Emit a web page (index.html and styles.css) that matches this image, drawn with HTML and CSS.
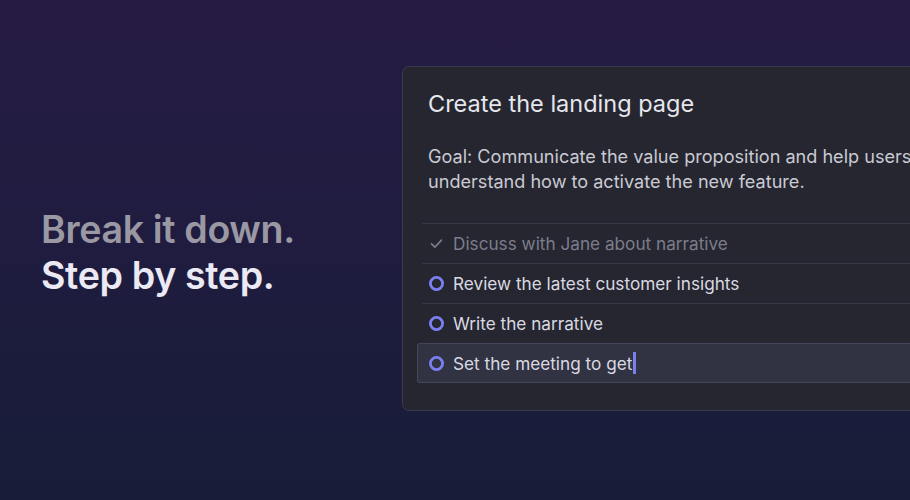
FILE: index.html
```html
<!DOCTYPE html>
<html>
<head>
<meta charset="utf-8">
<link rel="stylesheet" href="styles.css">
</head>
<body>
<div class="page">
  <div class="intro">
    <h1 class="headline"><span class="muted">Break it down.</span><span class="bright">Step by step.</span></h1>
  </div>
  <div class="card">
    <h2 class="title">Create the landing page</h2>
    <p class="goal">Goal: Communicate the value proposition and help users understand how to activate the new feature.</p>
    <ul class="list">
      <li class="row done">
        <svg class="icon" width="15" height="15" viewBox="0 0 15 15"><path d="M2.5 7.9 L5.9 11.1 L12.5 4.1" fill="none" stroke="#7c7d8a" stroke-width="1.6" stroke-linecap="round" stroke-linejoin="round"/></svg>
        <span>Discuss with Jane about narrative</span>
      </li>
      <li class="row">
        <svg class="icon" width="15" height="15" viewBox="0 0 15 15"><circle cx="7.5" cy="7.5" r="6.1" fill="none" stroke="#7b80f0" stroke-width="2.8"/></svg>
        <span>Review the latest customer insights</span>
      </li>
      <li class="row">
        <svg class="icon" width="15" height="15" viewBox="0 0 15 15"><circle cx="7.5" cy="7.5" r="6.1" fill="none" stroke="#7b80f0" stroke-width="2.8"/></svg>
        <span>Write the narrative</span>
      </li>
      <li class="row active">
        <svg class="icon" width="15" height="15" viewBox="0 0 15 15"><circle cx="7.5" cy="7.5" r="6.1" fill="none" stroke="#7b80f0" stroke-width="2.8"/></svg>
        <span>Set the meeting to get</span><span class="caret"></span>
      </li>
    </ul>
  </div>
</div>
</body>
</html>
```

FILE: styles.css
```css
* { box-sizing: border-box; }
html, body { margin: 0; padding: 0; }
body {
  width: 910px;
  height: 500px;
  overflow: hidden;
  font-family: Inter, "Noto Sans", sans-serif;
  background: linear-gradient(180deg, #261b43 0%, #201c40 45%, #171d38 100%);
}
.page {
  display: flex;
  height: 500px;
  padding-top: 66px;
}
.intro {
  width: 402px;
  flex: none;
  padding-left: 41px;
  padding-top: 141px;
}
.headline {
  margin: 0;
  font-size: 37.6px;
  font-weight: 600;
  line-height: 46px;
  letter-spacing: -0.35px;
  display: flex;
  flex-direction: column;
}
.muted { color: #9a98a3; }
.bright { color: #ebe9f3; }
.card {
  flex: none;
  width: 580px;
  height: 345px;
  background: #252630;
  border: 1px solid #3a3b4a;
  border-radius: 7px;
  padding: 22px 0 26px 0;
}
.title {
  margin: 0 0 0 25px;
  font-size: 23.5px;
  font-weight: 400;
  line-height: 29px;
  color: #e6e6ed;
}
.goal {
  margin: 26px 0 0 25px;
  font-size: 18.1px;
  line-height: 25px;
  color: #cacad3;
}
.list {
  list-style: none;
  margin: 29px 0 0 19px;
  padding: 0;
}
.row {
  display: flex;
  align-items: center;
  height: 40px;
  border-top: 1px solid #363746;
  padding-left: 7px;
  font-size: 17.2px;
  color: #d9d9e1;
}
.row.done { color: #7c7d8b; }
.icon { flex: none; margin-right: 9px; }
.row.active {
  margin-left: -5px;
  padding-left: 11px;
  background: #313242;
  border: 1px solid #454659;
  border-right: none;
  border-radius: 3px 0 0 3px;
}
.caret {
  display: inline-block;
  width: 2.5px;
  height: 22px;
  margin-left: 1px;
  background: #7b80f0;
}
```
